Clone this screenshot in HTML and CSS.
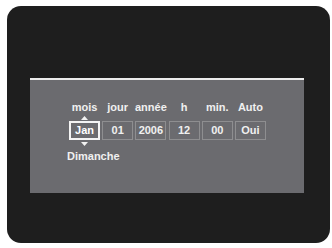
FILE: index.html
```html
<!DOCTYPE html>
<html>
<head>
    <title>Réglage horloge</title>
    <link rel="stylesheet" href="styles.css">
</head>

<body>

    <div class="screen">
        <div class="panel">

            <div class="fields">
                <div class="field">
                    <span class="label">mois</span>
                    <span class="arrow"><svg width="7" height="4" viewBox="0 0 7 4"><polygon points="3.5,0 7,4 0,4" fill="#f2f2f2"/></svg></span>
                    <span class="value selected">Jan</span>
                    <span class="arrow"><svg width="7" height="4" viewBox="0 0 7 4"><polygon points="0,0 7,0 3.5,4" fill="#f2f2f2"/></svg></span>
                </div>
                <div class="field">
                    <span class="label">jour</span>
                    <span class="arrow"></span>
                    <span class="value">01</span>
                </div>
                <div class="field">
                    <span class="label">année</span>
                    <span class="arrow"></span>
                    <span class="value">2006</span>
                </div>
                <div class="field">
                    <span class="label">h</span>
                    <span class="arrow"></span>
                    <span class="value">12</span>
                </div>
                <div class="field">
                    <span class="label">min.</span>
                    <span class="arrow"></span>
                    <span class="value">00</span>
                </div>
                <div class="field">
                    <span class="label">Auto</span>
                    <span class="arrow"></span>
                    <span class="value">Oui</span>
                </div>
            </div>

            <p class="weekday">Dimanche</p>

        </div>
    </div>

</body>
</html>
```

FILE: styles.css
```css
body {
    background-color: #ffffff;
    font-family: "Liberation Sans", Arial, sans-serif;
    margin: 0;
    padding: 0;
}

/* ecran noir aux coins arrondis */
.screen {
    width: 300px;
    height: 165px;
    margin: 6px 0 0 7px;
    padding: 72px 0 0 23px;
    background-color: #1e1e1e;
    border-radius: 14px;
}

.panel {
    width: 235px;
    height: 92px;
    padding: 21px 0 0 39px;
    background-color: #6b6b6f;
    border-top: 2px solid #ececec;
}

.fields {
    display: flex;
    gap: 2.2px;
}

.field {
    display: flex;
    flex-direction: column;
    align-items: center;
    width: 31px;
}

.label {
    color: #f0f0f0;
    font-size: 11px;
    font-weight: bold;
    line-height: 13px;
    white-space: nowrap;
}

.arrow {
    display: flex;
    align-items: center;
    justify-content: center;
    height: 7px;
}

.value {
    box-sizing: border-box;
    width: 31px;
    height: 19px;
    border: 1px solid #8e8e90;
    color: #f0f0f0;
    font-size: 11px;
    font-weight: bold;
    line-height: 17px;
    text-align: center;
}

.value.selected {
    border: 2px solid #f4f4f4;
    line-height: 15px;
    color: #ffffff;
}

.weekday {
    margin: 3px 0 0 -2px;
    color: #f0f0f0;
    font-size: 11px;
    font-weight: bold;
    line-height: 13px;
}
```
